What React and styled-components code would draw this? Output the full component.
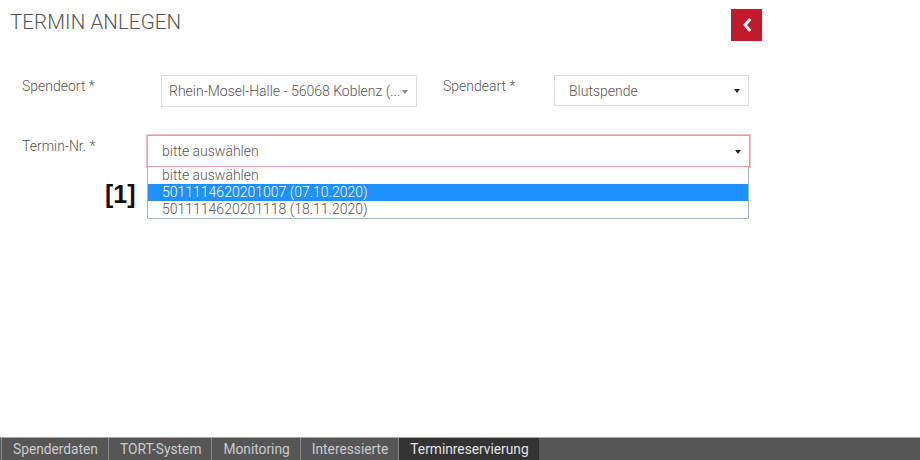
import styled, { createGlobalStyle } from 'styled-components';

const GlobalStyle = createGlobalStyle`
  html, body {
    margin: 0;
    padding: 0;
    background: #fff;
  }
  body {
    font-family: Roboto, "Liberation Sans", sans-serif;
  }
`;

const Page = styled.div`
  width: 920px;
  height: 460px;
  display: flex;
  flex-direction: column;
  overflow: hidden;
  background: #fff;
`;

const Main = styled.div`
  flex: 1;
  position: relative;
`;

const Header = styled.div`
  display: flex;
  align-items: flex-start;
  justify-content: space-between;
  width: 762px;
  padding: 9px 0 0 10px;
  box-sizing: border-box;
`;

const Title = styled.h1`
  margin: 0;
  padding-top: 1px;
  font-size: 20.5px;
  font-weight: 300;
  color: #555;
  letter-spacing: 0.1px;
`;

const BackButton = styled.button`
  width: 31px;
  height: 32px;
  border: none;
  padding: 0;
  background: #c21a2c;
  display: flex;
  align-items: center;
  justify-content: center;
  cursor: pointer;
`;

const Form = styled.div`
  padding: 34px 0 0 22px;
  display: flex;
  flex-direction: column;
  gap: 28px;
`;

const Row = styled.div`
  display: grid;
  grid-template-columns: ${p => p.$cols};
  align-items: start;
`;

const Label = styled.label`
  font-size: 14px;
  font-weight: 300;
  color: #555;
  padding-top: 3px;
`;

const Field = styled.div`
  position: relative;
`;

const SelectBox = styled.div`
  height: ${p => p.$h || 32}px;
  box-sizing: border-box;
  border: 1px solid ${p => (p.$error ? '#e59aa3' : '#ddd')};
  box-shadow: ${p => (p.$error ? '0 0 0 1px #f1c4c9' : 'none')};
  background: #fff;
  display: flex;
  align-items: center;
  justify-content: space-between;
  padding: 0 8px 0 ${p => p.$pl || 7}px;
  font-size: 14px;
  font-weight: 300;
  color: #555;
  white-space: nowrap;
`;

const Caret = styled.span`
  width: 0;
  height: 0;
  border-left: ${p => p.$size}px solid transparent;
  border-right: ${p => p.$size}px solid transparent;
  border-top: ${p => p.$size + 1}px solid ${p => p.$color};
  margin-top: 1px;
`;

const Options = styled.ul`
  list-style: none;
  margin: 0;
  padding: 0;
  border: 1px solid #9fb3c8;
  border-top: none;
  width: 602px;
  box-sizing: border-box;
`;

const Option = styled.li`
  height: 17px;
  line-height: 17px;
  padding-left: 14px;
  font-size: 14px;
  font-weight: 300;
  color: ${p => (p.$active ? '#fff' : '#555')};
  background: ${p => (p.$active ? '#1e90ff' : '#fff')};
`;

const Marker = styled.span`
  position: absolute;
  left: 105px;
  top: 180px;
  font-family: "Liberation Sans", Arial, sans-serif;
  font-weight: 700;
  font-size: 25px;
  color: #111;
`;

const TabBar = styled.nav`
  height: 23px;
  background: #565656;
  border-top: 1px solid #a8a8a8;
  display: flex;
  align-items: flex-end;
  padding-left: 1px;
  box-sizing: border-box;
  overflow: hidden;
`;

const Tab = styled.div`
  height: 19px;
  padding: 6px 10px 0 11px;
  box-sizing: content-box;
  font-size: 13.75px;
  font-weight: 400;
  color: ${p => (p.$active ? '#e4e4e4' : '#cbcbcb')};
  background: ${p => (p.$active ? '#333' : 'transparent')};
  border-left: 1px solid #8a8a8a;
  white-space: nowrap;
`;

const tabs = ['Spenderdaten', 'TORT-System', 'Monitoring', 'Interessierte', 'Terminreservierung'];

export default function App() {
  return (
    <Page>
      <GlobalStyle />
      <Main>
        <Header>
          <Title>TERMIN ANLEGEN</Title>
          <BackButton aria-label="Zurück">
            <svg width="10" height="14" viewBox="0 0 10 14">
              <path d="M7.5 2 L3 7 L7.5 12" fill="none" stroke="#fff" strokeWidth="3" strokeLinecap="round" strokeLinejoin="round" />
            </svg>
          </BackButton>
        </Header>

        <Form>
          <Row $cols="139px 256px 26px 111px 195px">
            <Label>Spendeort *</Label>
            <SelectBox>
              <span>Rhein-Mosel-Halle - 56068 Koblenz (...</span>
              <Caret $size={3} $color="#888" />
            </SelectBox>
            <span />
            <Label>Spendeart *</Label>
            <SelectBox $h={31} $pl={14}>
              <span>Blutspende</span>
              <Caret $size={3} $color="#222" />
            </SelectBox>
          </Row>

          <Row $cols="125px 603px">
            <Label>Termin-Nr. *</Label>
            <Field>
              <SelectBox $error $pl={14}>
                <span>bitte auswählen</span>
                <Caret $size={3} $color="#222" />
              </SelectBox>
              <Options>
                <Option>bitte auswählen</Option>
                <Option $active>5011114620201007 (07.10.2020)</Option>
                <Option>5011114620201118 (18.11.2020)</Option>
              </Options>
            </Field>
          </Row>
        </Form>

        <Marker>[1]</Marker>
      </Main>

      <TabBar>
        {tabs.map(t => (
          <Tab key={t} $active={t === 'Terminreservierung'}>{t}</Tab>
        ))}
      </TabBar>
    </Page>
  );
}
